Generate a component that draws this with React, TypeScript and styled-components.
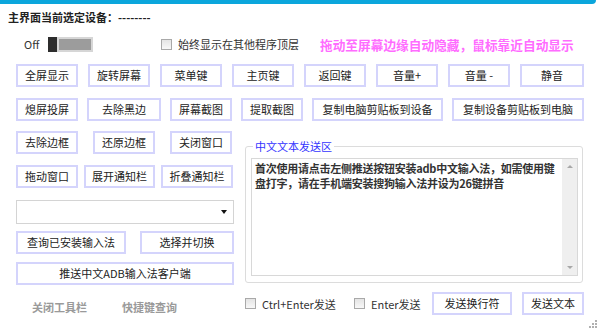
import React from 'react';
import styled, { createGlobalStyle } from 'styled-components';

const GlobalStyle = createGlobalStyle`
  html, body {
    margin: 0;
    padding: 0;
    background: #fff;
  }
  body {
    font-family: 'Noto Sans CJK SC', 'Noto Sans', sans-serif;
  }
`;

const Window = styled.div`
  position: relative;
  width: 600px;
  height: 331px;
  background: #fff;
  overflow: hidden;
  color: #262626;
  font-size: 11px;
`;

const TopBar = styled.div`
  width: 596px;
  height: 4px;
  background: #0ba6dc;
  border-bottom-right-radius: 4px;
`;

const Title = styled.div`
  height: 26px;
  line-height: 26px;
  padding-left: 8px;
  font-weight: bold;
  color: #222;
`;

const OptionRow = styled.div`
  display: flex;
  align-items: center;
  height: 28px;
  padding-left: 24px;
`;

const Cell = styled.div<{ $w: number }>`
  flex: 0 0 ${(p) => p.$w}px;
  display: flex;
  align-items: center;
`;

const OffLabel = styled.span`
  width: 24px;
  color: #333;
`;

const Knob = styled.span`
  width: 9px;
  height: 15px;
  background: #2d2d2d;
`;

const Track = styled.span`
  box-sizing: border-box;
  width: 36px;
  height: 15px;
  border: 2px solid #d6d6d6;
  background: #9c9c9c;
`;

const Hint = styled.span`
  font-size: 12.7px;
  font-weight: bold;
  color: #ff6cff;
`;

const CheckLabel = styled.label`
  display: flex;
  align-items: center;
  gap: 6px;
  color: #333;
  white-space: nowrap;
`;

const Box = styled.span`
  box-sizing: border-box;
  width: 11px;
  height: 11px;
  border: 1px solid #a9a9a9;
  background: linear-gradient(#e4e4e4, #f8f8f8);
`;

const ButtonRow = styled.div<{ $gap: number; $top: number }>`
  display: flex;
  gap: ${(p) => p.$gap}px;
  margin-top: ${(p) => p.$top}px;
`;

const PaddedRow = styled(ButtonRow)`
  padding-left: 16px;
`;

const Btn = styled.button<{ $w: number }>`
  box-sizing: border-box;
  width: ${(p) => p.$w}px;
  height: 23px;
  padding: 0;
  border: 2px solid #d4d4fc;
  background: #fff;
  font-family: inherit;
  font-size: 11px;
  line-height: 19px;
  color: #222;
  white-space: nowrap;
`;

const Lower = styled.div`
  display: flex;
  margin-top: 10px;
  padding-left: 16px;
`;

const LeftCol = styled.div`
  width: 218px;
  display: flex;
  flex-direction: column;
`;

const Combo = styled.div`
  box-sizing: border-box;
  height: 24px;
  margin-top: 12px;
  border: 1px solid #d4d4d4;
  display: flex;
  align-items: center;
  justify-content: flex-end;
  padding-right: 6px;
`;

const Caret = styled.span`
  width: 0;
  height: 0;
  border-left: 3.5px solid transparent;
  border-right: 3.5px solid transparent;
  border-top: 4px solid #111;
`;

const Group = styled.fieldset`
  box-sizing: border-box;
  width: 338px;
  height: 145px;
  margin: 7px 0 0 11px;
  padding: 4px 4px 6px 5px;
  border: 1px solid #dcdcdc;
  border-radius: 3px;
  display: flex;
  flex-direction: column;
`;

const Legend = styled.legend`
  margin-left: 2px;
  padding: 0 2px;
  line-height: 16px;
  color: #3434ff;
`;

const TextBox = styled.div`
  box-sizing: border-box;
  height: 118px;
  display: flex;
  border: 1px solid #d8d8d8;
`;

const TextContent = styled.div`
  flex: 1;
  padding: 2px 2px 0 3px;
  line-height: 15px;
  letter-spacing: -0.25px;
  font-weight: bold;
  color: #333;
`;

const ScrollTrack = styled.div`
  width: 15px;
  background: #efefef;
  display: flex;
  flex-direction: column;
  justify-content: space-between;
  align-items: center;
  padding: 6px 0;
`;

const Arrow = styled.span<{ $up?: boolean }>`
  width: 0;
  height: 0;
  border-left: 3px solid transparent;
  border-right: 3px solid transparent;
  ${(p) => (p.$up ? 'border-bottom: 3px solid #a8a8a8;' : 'border-top: 3px solid #a8a8a8;')}
`;

const Footer = styled.div`
  display: flex;
  align-items: center;
  margin-top: 7px;
`;

const Links = styled.div`
  flex: 0 0 245px;
  box-sizing: border-box;
  display: flex;
  gap: 35px;
  padding: 6px 0 0 32px;
`;

const LinkText = styled.span`
  color: #9a9a9a;
  font-weight: bold;
`;

const Grip = styled.svg`
  position: absolute;
  right: 3px;
  bottom: 3px;
`;

const Check: React.FC<{ text: string }> = ({ text }) => (
  <CheckLabel>
    <Box />
    {text}
  </CheckLabel>
);

export default function App() {
  return (
    <Window>
      <GlobalStyle />
      <TopBar />
      <Title>主界面当前选定设备：--------</Title>
      <OptionRow>
        <Cell $w={137}>
          <OffLabel>Off</OffLabel>
          <Knob />
          <Track />
        </Cell>
        <Cell $w={159}>
          <Check text="始终显示在其他程序顶层" />
        </Cell>
        <Hint>拖动至屏幕边缘自动隐藏，鼠标靠近自动显示</Hint>
      </OptionRow>

      <PaddedRow $gap={10} $top={6}>
        <Btn $w={62}>全屏显示</Btn>
        <Btn $w={62}>旋转屏幕</Btn>
        <Btn $w={62}>菜单键</Btn>
        <Btn $w={62}>主页键</Btn>
        <Btn $w={62}>返回键</Btn>
        <Btn $w={62}>音量+</Btn>
        <Btn $w={62}>音量 -</Btn>
        <Btn $w={64}>静音</Btn>
      </PaddedRow>

      <PaddedRow $gap={9} $top={11}>
        <Btn $w={62}>熄屏投屏</Btn>
        <Btn $w={74}>去除黑边</Btn>
        <Btn $w={62}>屏幕截图</Btn>
        <Btn $w={62}>提取截图</Btn>
        <Btn $w={131}>复制电脑剪贴板到设备</Btn>
        <Btn $w={132}>复制设备剪贴板到电脑</Btn>
      </PaddedRow>

      <Lower>
        <LeftCol>
          <ButtonRow $gap={15} $top={0}>
            <Btn $w={62}>去除边框</Btn>
            <Btn $w={62}>还原边框</Btn>
            <Btn $w={62}>关闭窗口</Btn>
          </ButtonRow>
          <ButtonRow $gap={6} $top={11}>
            <Btn $w={62}>拖动窗口</Btn>
            <Btn $w={71}>展开通知栏</Btn>
            <Btn $w={72}>折叠通知栏</Btn>
          </ButtonRow>
          <Combo>
            <Caret />
          </Combo>
          <ButtonRow $gap={14} $top={7}>
            <Btn $w={110}>查询已安装输入法</Btn>
            <Btn $w={94}>选择并切换</Btn>
          </ButtonRow>
          <ButtonRow $gap={0} $top={8}>
            <Btn $w={218}>推送中文ADB输入法客户端</Btn>
          </ButtonRow>
        </LeftCol>

        <Group>
          <Legend>中文文本发送区</Legend>
          <TextBox>
            <TextContent>
              首次使用请点击左侧推送按钮安装adb中文输入法，如需使用键盘打字，请在手机端安装搜狗输入法并设为26键拼音
            </TextContent>
            <ScrollTrack>
              <Arrow $up />
              <Arrow />
            </ScrollTrack>
          </TextBox>
        </Group>
      </Lower>

      <Footer>
        <Links>
          <LinkText>关闭工具栏</LinkText>
          <LinkText>快捷键查询</LinkText>
        </Links>
        <Cell $w={109}>
          <Check text="Ctrl+Enter发送" />
        </Cell>
        <Cell $w={78}>
          <Check text="Enter发送" />
        </Cell>
        <ButtonRow $gap={10} $top={0}>
          <Btn $w={80}>发送换行符</Btn>
          <Btn $w={62}>发送文本</Btn>
        </ButtonRow>
      </Footer>

      <Grip width="8" height="8" viewBox="0 0 8 8">
        <g fill="#b0b0b0">
          <rect x="6" y="0" width="2" height="2" />
          <rect x="3" y="3" width="2" height="2" />
          <rect x="6" y="3" width="2" height="2" />
          <rect x="0" y="6" width="2" height="2" />
          <rect x="3" y="6" width="2" height="2" />
          <rect x="6" y="6" width="2" height="2" />
        </g>
      </Grip>
    </Window>
  );
}
